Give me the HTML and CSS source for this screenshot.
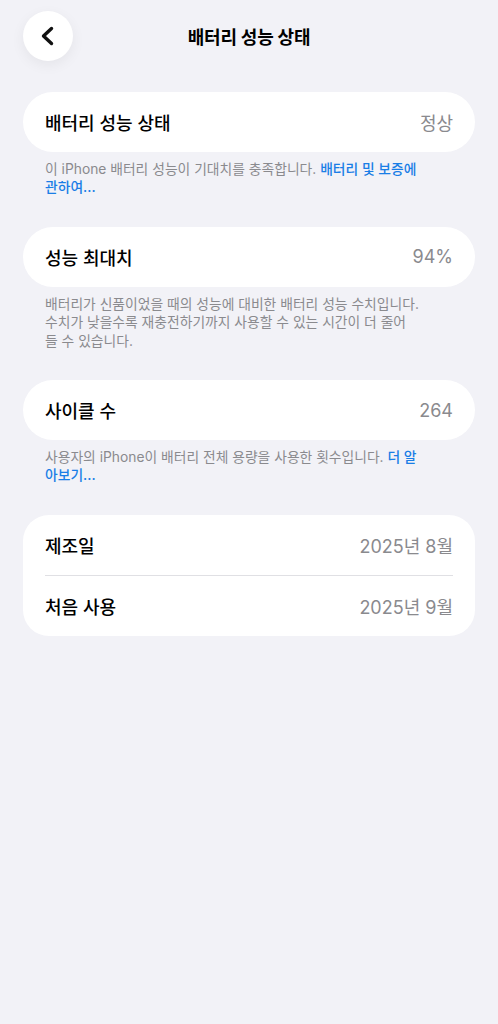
FILE: index.html
```html
<!DOCTYPE html>
<html lang="ko">
<head>
    <meta charset="UTF-8">
    <meta name="viewport" content="width=device-width, initial-scale=1.0">
    <title>배터리 성능 상태</title>
    <link rel="stylesheet" href="styles.css">
</head>
<body>
    <header class="nav-bar">
        <button class="back-button" aria-label="뒤로">
            <svg width="22" height="22" viewBox="0 0 22 22">
                <path d="M14.5 3.5 L6.5 11 L14.5 18.5" fill="none" stroke="#111" stroke-width="3.4" stroke-linecap="round" stroke-linejoin="round"/>
            </svg>
        </button>
        <h1 class="nav-title">배터리 성능 상태</h1>
    </header>

    <section class="group">
        <div class="card">
            <div class="row">
                <span class="row-label">배터리 성능 상태</span>
                <span class="row-value">정상</span>
            </div>
        </div>
        <p class="footer-text">이 iPhone 배터리 성능이 기대치를 충족합니다. <a href="#">배터리 및 보증에<br>관하여...</a></p>
    </section>

    <section class="group">
        <div class="card">
            <div class="row">
                <span class="row-label">성능 최대치</span>
                <span class="row-value">94%</span>
            </div>
        </div>
        <p class="footer-text">배터리가 신품이었을 때의 성능에 대비한 배터리 성능 수치입니다.<br>수치가 낮을수록 재충전하기까지 사용할 수 있는 시간이 더 줄어<br>들 수 있습니다.</p>
    </section>

    <section class="group">
        <div class="card">
            <div class="row">
                <span class="row-label">사이클 수</span>
                <span class="row-value">264</span>
            </div>
        </div>
        <p class="footer-text">사용자의 iPhone이 배터리 전체 용량을 사용한 횟수입니다. <a href="#">더 알<br>아보기...</a></p>
    </section>

    <section class="group">
        <div class="card card-list">
            <div class="row">
                <span class="row-label">제조일</span>
                <span class="row-value">2025년 8월</span>
            </div>
            <div class="row">
                <span class="row-label">처음 사용</span>
                <span class="row-value">2025년 9월</span>
            </div>
        </div>
    </section>
</body>
</html>
```

FILE: styles.css
```css
body {
    font-family: Inter, "Noto Sans CJK KR", sans-serif;
    margin: 0;
    padding: 11px 23px 40px;
    background-color: #f2f2f7;
    color: #000;
    min-height: 1024px;
    box-sizing: border-box;
}
.nav-bar {
    position: relative;
    display: flex;
    align-items: center;
    justify-content: center;
    height: 50px;
    margin-bottom: 31px;
}
.back-button {
    position: absolute;
    left: 0;
    top: 0;
    width: 50px;
    height: 50px;
    border: none;
    border-radius: 50%;
    background-color: #fff;
    box-shadow: 0 4px 14px rgba(0, 0, 0, 0.06);
    display: flex;
    align-items: center;
    justify-content: center;
    padding: 0;
}
.nav-title {
    margin: 0;
    font-size: 18px;
    font-weight: 700;
    letter-spacing: -0.2px;
}
.group {
    margin-bottom: 30px;
}
.card {
    background-color: #fff;
    border-radius: 30px;
    padding: 0 22px;
}
.card-list {
    border-radius: 26px;
}
.row {
    display: flex;
    justify-content: space-between;
    align-items: center;
    height: 60px;
    font-size: 18px;
}
.card-list .row + .row {
    border-top: 1px solid #e0e0e4;
}
.row-label {
    font-weight: 500;
}
.row-value {
    color: #8a8a8e;
}
.footer-text {
    margin: 8px 22px 0;
    font-size: 13.8px;
    line-height: 18.4px;
    color: #8a8a8e;
}
.footer-text a {
    color: #1a7ee6;
    font-weight: 500;
    text-decoration: none;
}
```
